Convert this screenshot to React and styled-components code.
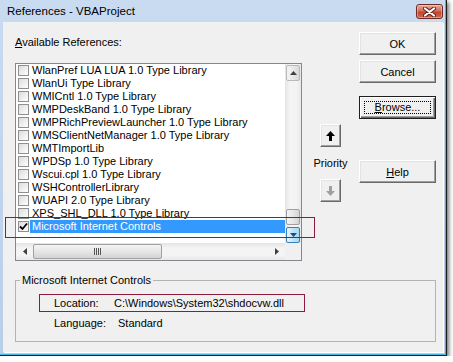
import React from 'react'
import styled, { createGlobalStyle } from 'styled-components'

const GlobalStyle = createGlobalStyle`
  body {
    margin: 0;
    background: #fff;
    font-family: "Liberation Sans", Arial, sans-serif;
    font-size: 11px;
    color: #000;
  }
`

const Window = styled.div`
  width: 447px;
  height: 356px;
  box-sizing: border-box;
  padding: 0 3px 3px 3px;
  display: flex;
  flex-direction: column;
  background: linear-gradient(#c8dbf0, #b8cfe9);
  border-right: 1px solid #1c1c1c;
  border-bottom: 1px solid #1c1c1c;
  box-shadow: inset -1px -1px 0 #3fb7e3, 2px 2px 4px rgba(0, 0, 0, 0.55);
`

const TitleBar = styled.div`
  height: 22px;
  display: flex;
  align-items: center;
  justify-content: space-between;
  padding-left: 4px;
  font-size: 11.5px;
`

const CloseButton = styled.div`
  width: 27px;
  height: 15px;
  box-sizing: border-box;
  margin-top: 1px;
  display: flex;
  align-items: center;
  justify-content: center;
  border: 1px solid #6e2a22;
  border-radius: 3px;
  background: linear-gradient(#e9a99b, #d0705f 45%, #c04632 55%, #cf6a4e);
  box-shadow: inset 0 0 0 1px rgba(255, 255, 255, 0.35);
`

const Client = styled.div`
  flex: 1;
  position: relative;
  background: #f0f0f0;
  padding: 10px 0 0 12px;
  box-shadow: 1px 1px 0 #fff;
`

const TopRow = styled.div`
  display: flex;
  align-items: flex-start;
`

const LeftColumn = styled.div`
  width: 287px;
`

const Label = styled.div`
  padding-top: 2px;
  line-height: 16px;
  margin-bottom: 13px;
`

const ListBox = styled.div`
  width: 287px;
  height: 198px;
  box-sizing: border-box;
  border: 1px solid #828790;
  background: #fff;
  display: grid;
  grid-template-columns: 1fr 16px;
  grid-template-rows: 1fr 17px;
`

const Items = styled.div`
  overflow: hidden;
`

const Row = styled.div`
  height: ${({ $h }) => $h || 13}px;
  overflow: hidden;
  display: flex;
  align-items: center;
  padding-left: 2px;
`

const Check = styled.div`
  width: 11px;
  height: 11px;
  box-sizing: border-box;
  flex: none;
  border: 1px solid #8e8f8f;
  background: linear-gradient(135deg, #dcdcdc, #fff);
  display: flex;
  align-items: center;
  justify-content: center;
`

const ItemText = styled.span`
  flex: 1;
  margin-left: 1px;
  padding: 0 2px;
  line-height: 13px;
  white-space: nowrap;
  background: ${({ $selected }) => ($selected ? '#3399ff' : 'transparent')};
  color: ${({ $selected }) => ($selected ? '#fff' : '#000')};
`

const VScroll = styled.div`
  display: flex;
  flex-direction: column;
  background: linear-gradient(90deg, #e4e4e4, #f4f4f4 30%, #f4f4f4 70%, #e8e8e8);
`

const Track = styled.div`
  flex: 1;
  display: flex;
  flex-direction: ${({ $horizontal }) => ($horizontal ? 'row' : 'column')};
  justify-content: ${({ $end }) => ($end ? 'flex-end' : 'flex-start')};
  padding: ${({ $horizontal }) => ($horizontal ? '1px 0' : '0 1px 1px 1px')};
`

const ScrollButton = styled.div`
  height: 16px;
  box-sizing: border-box;
  margin: 1px 1px 0 1px;
  display: flex;
  align-items: center;
  justify-content: center;
  border-radius: 2px;
  border: 1px solid ${({ $hover }) => ($hover ? '#3c7fb1' : '#b9b9b9')};
  background: ${({ $hover }) =>
    $hover
      ? 'linear-gradient(90deg, #e8f5fd, #bfe4f9 50%, #a7d9f5)'
      : 'linear-gradient(90deg, #f4f4f4, #e8e8e8 50%, #d8d8d8)'};
`

const VThumb = styled.div`
  height: 14px;
  border: 1px solid #a0a0a0;
  border-radius: 2px;
  background: linear-gradient(90deg, #f4f4f4, #e6e6e6 50%, #d4d4d4);
`

const HScroll = styled.div`
  display: flex;
  background: linear-gradient(#e4e4e4, #f4f4f4 30%, #f4f4f4 70%, #e8e8e8);
`

const ArrowCell = styled.div`
  width: 17px;
  flex: none;
  display: flex;
  align-items: center;
  justify-content: center;
`

const HThumb = styled.div`
  width: 129px;
  box-sizing: border-box;
  border: 1px solid #a0a0a0;
  border-radius: 2px;
  background: linear-gradient(#f4f4f4, #e6e6e6 50%, #d4d4d4);
  display: flex;
  align-items: center;
  justify-content: center;
`

const Corner = styled.div`
  background: #f0f0f0;
`

const MiddleColumn = styled.div`
  width: 41px;
  margin-left: 8px;
  padding-top: 92px;
  display: flex;
  flex-direction: column;
  align-items: center;
`

const Priority = styled.div`
  line-height: 16px;
  margin: 8px 0;
`

const RightColumn = styled.div`
  width: 77px;
  margin-left: 8px;
  display: flex;
  flex-direction: column;
`

const Button = styled.div`
  width: ${({ $w }) => $w || 77}px;
  height: 23px;
  box-sizing: border-box;
  margin-top: ${({ $mt }) => $mt || 0}px;
  display: flex;
  align-items: center;
  justify-content: center;
  background: #f0f0f0;
  border: 1px solid;
  border-color: ${({ $default }) =>
    $default ? '#1e1e1e' : '#fff #696969 #696969 #fff'};
  box-shadow: ${({ $default }) =>
    $default
      ? 'inset 1px 1px 0 #fff, inset -1px -1px 0 #696969, inset -2px -2px 0 #a0a0a0'
      : 'inset -1px -1px 0 #a0a0a0, inset 1px 1px 0 #e3e3e3'};
`

const Focus = styled.div`
  width: 67px;
  height: 13px;
  box-sizing: border-box;
  border: 1px dotted #000;
  display: flex;
  align-items: center;
  justify-content: center;
  line-height: 11px;
`

const Group = styled.fieldset`
  width: 421px;
  box-sizing: border-box;
  margin: 12px 0 0 0;
  padding: 0 0 10px 0;
  border: 1px solid #b4b4b4;
  min-inline-size: 0;
`

const Legend = styled.legend`
  margin-left: 4px;
  padding: 0 2px;
  line-height: 14px;
`

const InfoRow = styled.div`
  display: flex;
  width: 266px;
  box-sizing: border-box;
  margin: ${({ $mt }) => $mt}px 0 0 23px;
  padding-left: ${({ $marked }) => ($marked ? 14 : 15)}px;
  line-height: 16px;
  border: ${({ $marked }) => ($marked ? '1px solid #8c1c3c' : 'none')};
`

const InfoLabel = styled.span`
  width: ${({ $w }) => $w}px;
  flex: none;
`

const Marker = styled.div`
  position: absolute;
  left: 2px;
  top: 195px;
  width: 310px;
  height: 21px;
  box-sizing: border-box;
  border: 1px solid #8c1c3c;
  pointer-events: none;
`

const items = [
  'WlanPref LUA LUA 1.0 Type Library',
  'WlanUi Type Library',
  'WMICntl 1.0 Type Library',
  'WMPDeskBand 1.0 Type Library',
  'WMPRichPreviewLauncher 1.0 Type Library',
  'WMSClientNetManager 1.0 Type Library',
  'WMTImportLib',
  'WPDSp 1.0 Type Library',
  'Wscui.cpl 1.0 Type Library',
  'WSHControllerLibrary',
  'WUAPI 2.0 Type Library',
]

const CloseX = () => (
  <svg width="13" height="10" viewBox="0 0 13 10">
    <path
      d="M2 1.5 L11 8.5 M11 1.5 L2 8.5"
      stroke="#5a1f18"
      strokeWidth="4"
      strokeLinecap="round"
    />
    <path
      d="M2 1.5 L11 8.5 M11 1.5 L2 8.5"
      stroke="#fff"
      strokeWidth="2.2"
      strokeLinecap="round"
    />
  </svg>
)

const CheckMark = () => (
  <svg width="9" height="9" viewBox="0 0 9 9">
    <path d="M1 4.5 L3.5 7 L8 1.5" stroke="#000" strokeWidth="1.8" fill="none" />
  </svg>
)

const Tri = ({ dir, color = '#404040' }) => {
  const d = {
    up: 'M0 4 L3.5 0 L7 4 Z',
    down: 'M0 0 L7 0 L3.5 4 Z',
    left: 'M4 0 L4 7 L0 3.5 Z',
    right: 'M0 0 L4 3.5 L0 7 Z',
  }[dir]
  const vertical = dir === 'up' || dir === 'down'
  return (
    <svg width={vertical ? 7 : 4} height={vertical ? 4 : 7}>
      <path d={d} fill={color} />
    </svg>
  )
}

const Grip = ({ vertical }) => (
  <svg width={vertical ? 7 : 7} height={vertical ? 7 : 7}>
    {[0, 2, 4, 6].map(x => (
      <rect key={x} x={x} y="0" width="1" height="7" fill="#555" />
    ))}
  </svg>
)

const BigArrow = ({ down, color }) => (
  <svg width="9" height="10" viewBox="0 0 9 10">
    <path
      d={down ? 'M3 0 H6 V5 H9 L4.5 10 L0 5 H3 Z' : 'M4.5 0 L9 5 H6 V10 H3 V5 H0 Z'}
      fill={color}
    />
  </svg>
)

export default function App() {
  return (
    <>
      <GlobalStyle />
      <Window>
        <TitleBar>
          <span>References - VBAProject</span>
          <CloseButton>
            <CloseX />
          </CloseButton>
        </TitleBar>
        <Client>
          <TopRow>
            <LeftColumn>
              <Label>
                <u>A</u>vailable References:
              </Label>
              <ListBox>
                <Items>
                  {items.map(item => (
                    <Row key={item}>
                      <Check />
                      <ItemText>{item}</ItemText>
                    </Row>
                  ))}
                  <Row>
                    <Check />
                    <ItemText>XPS_SHL_DLL 1.0 Type Library</ItemText>
                  </Row>
                  <Row>
                    <Check>
                      <CheckMark />
                    </Check>
                    <ItemText $selected>Microsoft Internet Controls</ItemText>
                  </Row>
                </Items>
                <VScroll>
                  <ScrollButton>
                    <Tri dir="up" />
                  </ScrollButton>
                  <Track $end>
                    <VThumb />
                  </Track>
                  <ScrollButton $hover>
                    <Tri dir="down" color="#1c4f7c" />
                  </ScrollButton>
                </VScroll>
                <HScroll>
                  <ArrowCell>
                    <Tri dir="left" />
                  </ArrowCell>
                  <Track $horizontal>
                    <HThumb>
                      <Grip />
                    </HThumb>
                  </Track>
                  <ArrowCell>
                    <Tri dir="right" />
                  </ArrowCell>
                </HScroll>
                <Corner />
              </ListBox>
            </LeftColumn>
            <MiddleColumn>
              <Button $w={21}>
                <BigArrow color="#000" />
              </Button>
              <Priority>Priority</Priority>
              <Button $w={21}>
                <BigArrow down color="#a0a0a0" />
              </Button>
            </MiddleColumn>
            <RightColumn>
              <Button>OK</Button>
              <Button $mt={5}>Cancel</Button>
              <Button $mt={13} $default>
                <Focus>
                  <span>
                    <u>B</u>rowse...
                  </span>
                </Focus>
              </Button>
              <Button $mt={41}>
                <span>
                  <u>H</u>elp
                </span>
              </Button>
            </RightColumn>
          </TopRow>
          <Group>
            <Legend>Microsoft Internet Controls</Legend>
            <InfoRow $mt={7} $marked>
              <InfoLabel $w={60}>Location:</InfoLabel>
              <span>C:\Windows\System32\shdocvw.dll</span>
            </InfoRow>
            <InfoRow $mt={3}>
              <InfoLabel $w={64}>Language:</InfoLabel>
              <span>Standard</span>
            </InfoRow>
          </Group>
          <Marker />
        </Client>
      </Window>
    </>
  )
}
